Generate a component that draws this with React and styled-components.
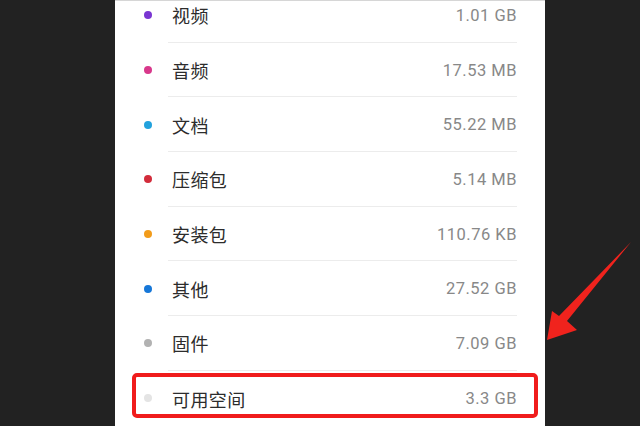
import styled, { createGlobalStyle } from "styled-components";

const GlobalStyle = createGlobalStyle`
  html, body {
    margin: 0;
    padding: 0;
    background: #222222;
    overflow: hidden;
  }
  #root {
    height: 426px;
  }
`;

const storage = [
  { name: "视频", size: "1.01 GB", color: "#7a36d2" },
  { name: "音频", size: "17.53 MB", color: "#d8388b" },
  { name: "文档", size: "55.22 MB", color: "#22a2dd" },
  { name: "压缩包", size: "5.14 MB", color: "#d22c3b" },
  { name: "安装包", size: "110.76 KB", color: "#f29c1b" },
  { name: "其他", size: "27.52 GB", color: "#1677d8" },
  { name: "固件", size: "7.09 GB", color: "#b2b2b2" },
  { name: "可用空间", size: "3.3 GB", color: "#e4e4e4", marked: true },
];

export default function App() {
  return (
    <>
      <GlobalStyle />
      <Screen>
        <Panel>
          <List>
            {storage.map((item, index) => (
              <Row key={item.name}>
                <Dot color={item.color} />
                <RowBody last={index === storage.length - 1}>
                  <Label>{item.name}</Label>
                  <Size>{item.size}</Size>
                </RowBody>
                {item.marked && <Highlight />}
              </Row>
            ))}
          </List>
        </Panel>
        <Arrow viewBox="0 0 640 426" width="640" height="426">
          <path
            d="M631 242 L567 321 L577 330 L547 340 L552 311 L559 316 Z"
            fill="#f0231d"
          />
        </Arrow>
      </Screen>
    </>
  );
}

const Screen = styled.div`
  position: relative;
  width: 640px;
  height: 426px;
  overflow: hidden;
  background: #222222;
`;

const Panel = styled.div`
  width: 430px;
  height: 426px;
  margin-left: 115px;
  background: #ffffff;
  border-top: 1px solid #d6d6d6;
  box-sizing: border-box;
  overflow: hidden;
`;

const List = styled.ul`
  list-style: none;
  margin: -13px 0 0 0;
  padding: 0;
`;

const Row = styled.li`
  position: relative;
  display: flex;
  align-items: center;
  height: 54.7px;
  padding: 0 28px 0 29px;
`;

const Dot = styled.span`
  width: 8px;
  height: 8px;
  border-radius: 50%;
  background: ${(p) => p.color};
  flex-shrink: 0;
  margin-right: 16px;
`;

const RowBody = styled.div`
  flex: 1;
  height: 100%;
  display: flex;
  align-items: center;
  justify-content: space-between;
  box-sizing: border-box;
  border-bottom: ${(p) => (p.last ? "none" : "1px solid #ececec")};
  padding: 1px 0 0 4px;
`;

const Label = styled.span`
  font-family: "Noto Sans CJK SC", "Noto Sans", sans-serif;
  font-size: 18px;
  letter-spacing: 0.4px;
  color: #2c2c2c;
`;

const Size = styled.span`
  font-family: Roboto, "Noto Sans", sans-serif;
  font-size: 16.5px;
  letter-spacing: 0.5px;
  color: #888888;
`;

const Highlight = styled.div`
  position: absolute;
  top: 2px;
  left: 17px;
  right: 7px;
  height: 45px;
  border: 4px solid #f01c1c;
  border-radius: 5px;
  box-sizing: border-box;
  pointer-events: none;
`;

const Arrow = styled.svg`
  position: absolute;
  top: 0;
  left: 0;
  pointer-events: none;
`;
